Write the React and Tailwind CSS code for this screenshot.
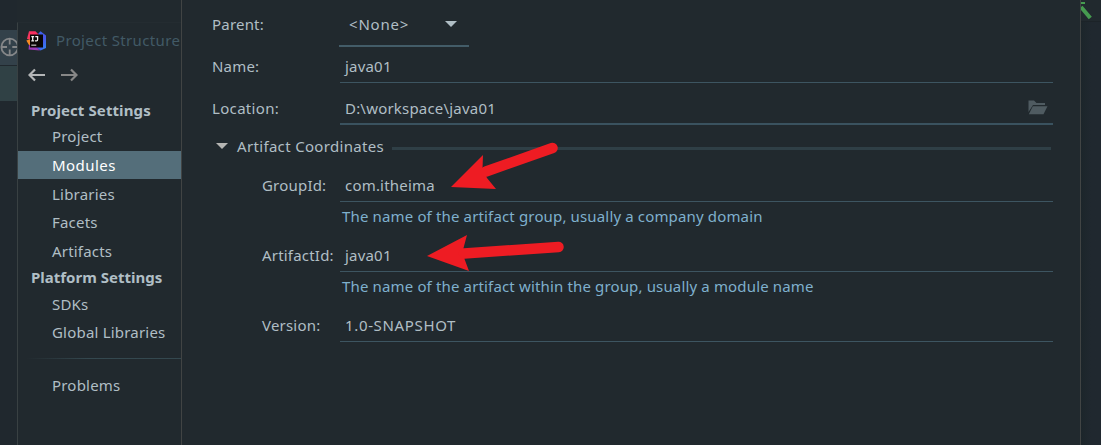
import React from "react";

const LINE = "border-[#3d5561]";

function IdeaLogo() {
  return (
    <svg width="21" height="20" viewBox="0 0 21 20" className="shrink-0">
      <defs>
        <linearGradient id="blue" x1="0" y1="0" x2="1" y2="1">
          <stop offset="0" stopColor="#2f6df0" />
          <stop offset="0.6" stopColor="#4a55e8" />
          <stop offset="1" stopColor="#2b8cf5" />
        </linearGradient>
        <linearGradient id="pink" x1="1" y1="0" x2="0" y2="1">
          <stop offset="0" stopColor="#fb2a62" />
          <stop offset="1" stopColor="#f43a5c" />
        </linearGradient>
      </defs>
      <path d="M12 3 L14.5 0.3 L20 4.5 L20 17 L14.5 19.5 L8 15 Z" fill="url(#blue)" />
      <path d="M3 0.3 L9.5 0.3 L13 4 L6 9 L1 8 Z" fill="url(#pink)" />
      <path d="M0.3 9.5 L5 8 L6 14 L3 14 Z" fill="#f98a21" />
      <path d="M3 14 L9 15 L14 19.5 L2.5 18.5 Z" fill="#9c3ab8" />
      <rect x="4" y="3.5" width="13" height="13" fill="#090606" />
      <path d="M5.3 5.6 H8.1 M6.7 5.6 V9.4 M5.3 9.8 H8.1 M9.3 5.6 H11.6 V8.6 Q11.6 9.8 10.6 9.8 H9" stroke="#f0f0f0" strokeWidth="1.3" fill="none" />
      <rect x="5.3" y="13.6" width="5" height="1.1" fill="#d8d8d8" />
    </svg>
  );
}

function NavArrow({ forward }) {
  return (
    <svg width="17" height="14" viewBox="0 0 17 14" fill="none" strokeWidth="2.2" className={forward ? "stroke-[#878787]" : "stroke-[#b4b6b7]"}>
      <path d={forward ? "M0 7 H15.5 M10 1.5 L15.5 7 L10 12.5" : "M17 7 H1.5 M7 1.5 L1.5 7 L7 12.5"} />
    </svg>
  );
}

function Item({ children, selected, className = "" }) {
  return (
    <div className={`flex items-center pl-[34px] ${selected ? "bg-[#546e7a] tracking-[0.45px] text-white" : ""} ${className}`}>
      {children}
    </div>
  );
}

function Field({ label, value, className, labelClass, spacing = "" }) {
  return (
    <div className={`flex ${className}`}>
      <div className={`flex shrink-0 items-center ${labelClass}`}><span>{label}</span></div>
      <div className={`flex w-[713px] items-center border-b pb-px pl-[5px] ${LINE}`}><span className={spacing}>{value}</span></div>
    </div>
  );
}

function Sidebar() {
  return (
    <aside className="mt-[22px] w-[164px] shrink-0 overflow-hidden border-l border-t border-l-[#394143] border-t-[#242c31]">
      <div className="flex h-[35px] items-center gap-[9px] pl-2 text-[#425a66]">
        <IdeaLogo />
        <span className="-mt-[2px] whitespace-nowrap tracking-[0.35px]">Project Structure</span>
      </div>
      <div className="flex h-[34px] items-center gap-4 pl-[10px]">
        <NavArrow />
        <NavArrow forward />
      </div>
      <div className="flex h-[31px] items-center pl-[13px] pt-[4px] font-bold tracking-[0.1px]">Project Settings</div>
      <Item className="h-[28px] pb-[2px]">Project</Item>
      <Item selected className="h-[28px]">Modules</Item>
      <Item className="h-[30px]">Libraries</Item>
      <Item className="h-[28px] pb-[2px]">Facets</Item>
      <Item className="h-[28px]">Artifacts</Item>
      <div className="flex h-[26px] items-center whitespace-nowrap pb-[2px] pl-[13px] font-bold tracking-normal">Platform Settings</div>
      <Item className="h-[27px] pb-[2px]">SDKs</Item>
      <Item className="h-[29px] whitespace-nowrap pb-[2px]">Global Libraries</Item>
      <div className="ml-2 mt-[11px] h-px bg-linear-to-r from-[#21292e] to-[#34484f] to-40%" />
      <Item className="mt-[11px] h-[30px]">Problems</Item>
    </aside>
  );
}

function Hint({ children }) {
  return (
    <div className="flex h-[29px] items-center pb-[2px] pl-[160px] tracking-[0.15px] text-[#7fb0cd]">
      <span>{children}</span>
    </div>
  );
}

function Arrow({ points, from, to, className }) {
  return (
    <svg width="150" height="60" viewBox="0 0 150 60" className={`absolute ${className}`}>
      <polygon points={points} fill="#ee1c23" />
      <line x1={from[0]} y1={from[1]} x2={to[0]} y2={to[1]} stroke="#ee1c23" strokeWidth="10.5" strokeLinecap="round" />
    </svg>
  );
}

export default function App() {
  return (
    <div className="relative flex h-[445px] w-[1101px] overflow-hidden bg-[#21292e] font-['Noto_Sans','Noto_Sans_CJK_SC',sans-serif] text-[15px] leading-5 tracking-[0.2px] text-[#b0bec5]">
      <div className="w-[17px] shrink-0 bg-[#20282e] pt-[30px]">
        <div className="h-[35px] overflow-hidden bg-[#33414a] pt-[7px]">
          <svg width="20" height="20" viewBox="0 0 20 20" fill="none" stroke="#858789" strokeWidth="1.8">
            <circle cx="9.7" cy="10" r="8.3" />
            <path d="M9.7 2 V7.5 M9.7 12.5 V18 M1.5 10 H7 M12.3 10 H18" />
          </svg>
        </div>
        <div className="mt-px h-[35px] bg-[#304145]" />
      </div>

      <Sidebar />

      <main className="w-[900px] shrink-0 border-x border-[#414444] bg-[#21292e]">
        <div className="flex h-[47px] pl-[30px]">
          <div className="flex w-[127px] items-center">Parent:</div>
          <div className="flex w-[130px] items-center justify-between border-b-2 border-[#435c68] pl-[10px] pr-3 pt-[3px] tracking-[0.8px]">
            <span>&lt;None&gt;</span>
            <svg width="12" height="6" viewBox="0 0 12 6"><path d="M0 0 H12 L6 6 Z" fill="#b0bec5" /></svg>
          </div>
        </div>
        <Field label="Name:" value="java01" className="h-[36px] pl-[30px]" labelClass="w-[128px] pt-[2px]" spacing="mt-[3px]" />
        <div className="flex h-[42px] pl-[30px]">
          <div className="flex w-[128px] items-center pt-[7px] tracking-[0.33px]">Location:</div>
          <div className="flex w-[713px] items-center justify-between border-b-2 border-[#3a525f] pl-[5px] pr-[5px] pt-[9px]">
            <span>D:\workspace\java01</span>
            <svg width="20" height="15" viewBox="0 0 20 15" fill="#4f5b61">
              <path d="M0.5 0.5 H6 L8.5 3 H17 V5 H5 L0.5 12 Z" />
              <path d="M4.8 6.3 H19.5 L15.5 14.3 H0.8 Z" />
            </svg>
          </div>
        </div>
        <div className="flex h-[45px] items-center pb-[3px] pl-[34px]">
          <svg width="12" height="6" viewBox="0 0 12 6"><path d="M0 0 H12 L6 6 Z" fill="#b5b5b3" /></svg>
          <span className="ml-[9px] w-[155px] shrink-0 tracking-[0.33px]">Artifact Coordinates</span>
          <div className="mt-[4px] h-[3px] w-[659px] bg-[#2f3f46]" />
        </div>
        <Field label="GroupId:" value="com.itheima" className="h-[32px] pl-[80px]" labelClass="w-[78px] pb-[2px]" />
        <Hint>The name of the artifact group, usually a company domain</Hint>
        <Field label="ArtifactId:" value="java01" className="mt-[9px] h-[32px] pl-[80px]" labelClass="w-[78px] pb-[2px]" />
        <Hint>The name of the artifact within the group, usually a module name</Hint>
        <Field label="Version:" value="1.0-SNAPSHOT" className="mt-[9px] h-[32px] pl-[80px]" labelClass="w-[78px] pb-[2px]" spacing="tracking-[0.65px]" />
      </main>

      <div className="flex-1 bg-linear-to-r from-[#1c252a] to-[#20282f] to-50%">
        <div className="h-[22px] border-b border-[#1c2328] bg-[#21292e]">
          <svg width="20" height="21" viewBox="0 0 20 21" fill="none" stroke="#469b50">
            <path d="M0 3 L4 3" strokeWidth="2" />
            <path d="M0 7 L9.3 18" strokeWidth="4" />
          </svg>
        </div>
      </div>

      <Arrow className="left-[440px] top-[135px]" points="11,52 43,20 42.5,34 47,43 56,54" from={[46, 36.5]} to={[112.5, 13]} />
      <Arrow className="left-[420px] top-[225px]" points="7,31 47,10 43.5,23 44.5,34 49,46" from={[44, 28.5]} to={[138.5, 22]} />
    </div>
  );
}
